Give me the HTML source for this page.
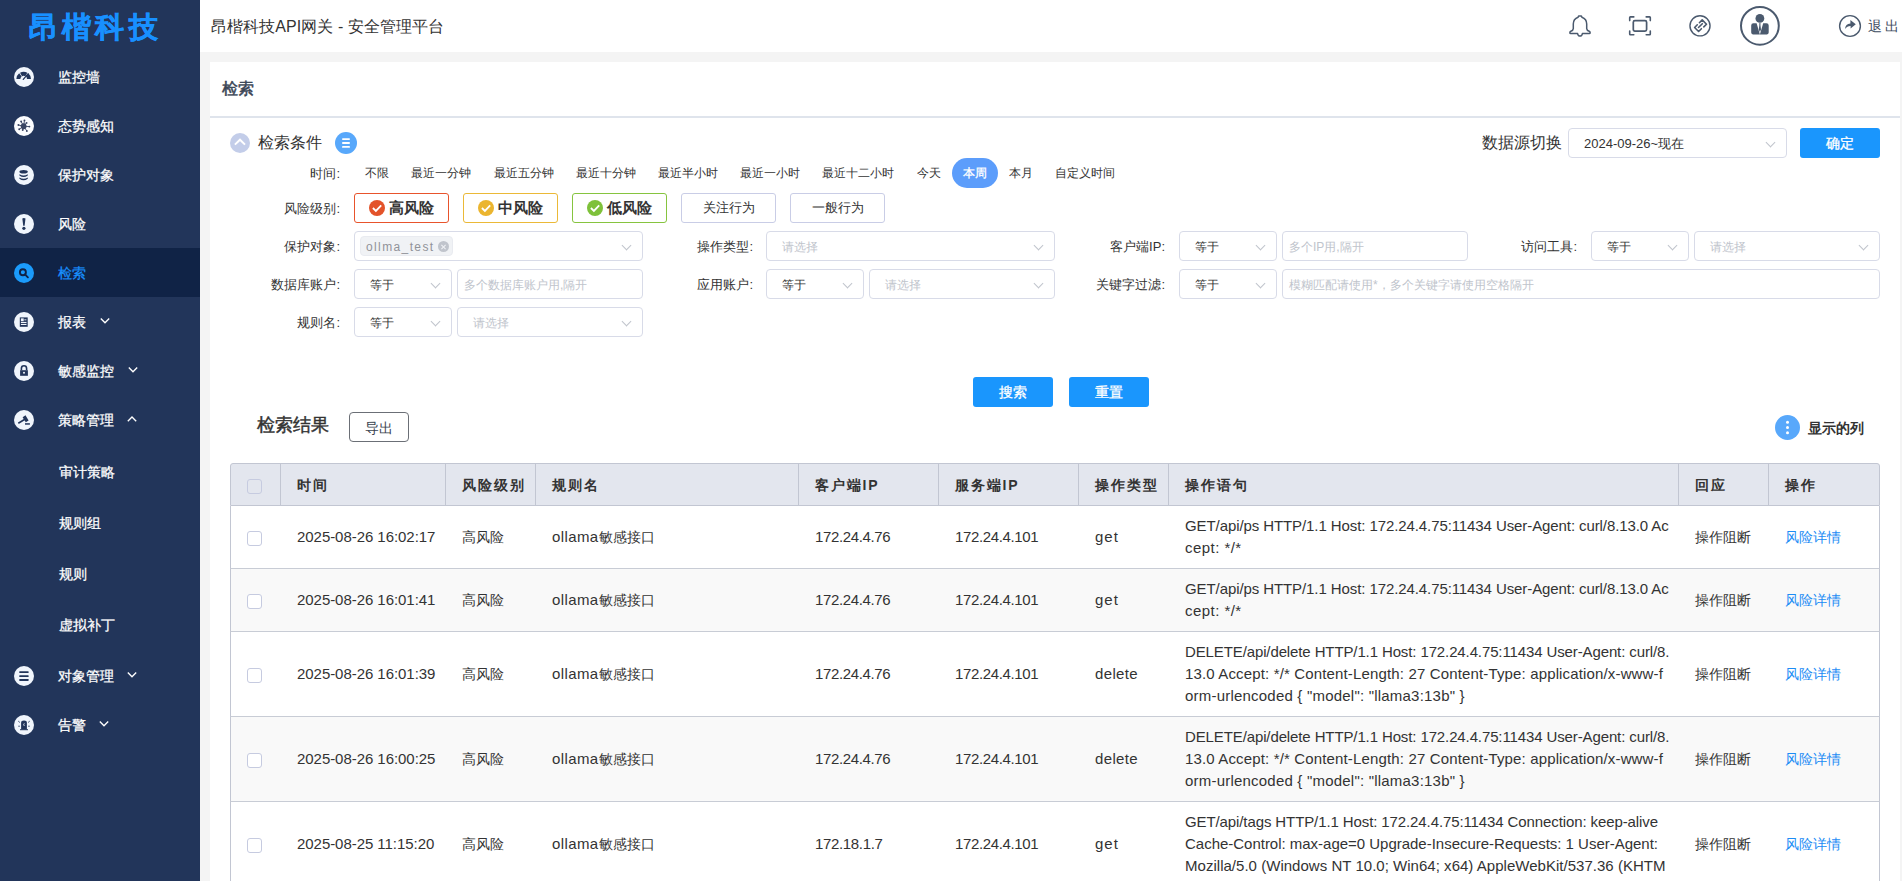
<!DOCTYPE html>
<html><head><meta charset="utf-8">
<style>
*{box-sizing:border-box;margin:0;padding:0}
html,body{width:1902px;height:881px;overflow:hidden;background:#f4f4f4;font-family:"Liberation Sans",sans-serif;color:#333}
.abs{position:absolute}
#side{position:absolute;left:0;top:0;width:200px;height:881px;background:#22355a}
#logo{position:absolute;left:28.5px;top:7px;font-size:29px;font-weight:bold;color:#1890ff;letter-spacing:4.4px;line-height:40px;white-space:nowrap;-webkit-text-stroke:0.5px #1890ff}
.mi{position:absolute;left:0;width:200px;height:49px}
.mi.act{background:#102346}
.mi svg{position:absolute;left:14px;top:14.5px}
.mi .t{position:absolute;left:58px;top:0.5px;line-height:49px;font-size:14px;color:#fff;white-space:nowrap;-webkit-text-stroke:0.25px #fff}
.mi.act .t{color:#1890ff;-webkit-text-stroke:0.25px #1890ff}
.mi .ar{position:absolute;top:20px}
.sub .t{left:59px;top:-0.5px}
#hdr{position:absolute;left:200px;top:0;width:1702px;height:52px;background:#fff}
#title{position:absolute;left:11px;top:1px;line-height:52px;font-size:16px;color:#333;white-space:nowrap;letter-spacing:0.08px}

.sel{position:absolute;border:1px solid #d8dbe8;border-radius:4px;background:#fff}
.sel span{position:absolute;top:0;line-height:30px;font-size:12px;color:#333;white-space:nowrap}
.sel span.ph{color:#c0c4cc}
.chev{position:absolute;top:10px;margin-left:1.5px;width:7px;height:7px;border-right:1px solid #c0c4cc;border-bottom:1px solid #c0c4cc;transform:rotate(45deg)}
.btn{position:absolute;background:#1a96fd;border-radius:3px;color:#fff;font-size:14px;text-align:center;line-height:30px;-webkit-text-stroke:0.3px #fff}
.lbl{position:absolute;font-size:13px;line-height:22px;color:#333;white-space:nowrap}
#times span{padding:0 11.12px;display:block}
#times span.on{background:#5c9dfb;color:#fff;border-radius:15px;-webkit-text-stroke:0.3px #fff}
.rb{position:absolute;top:193px;width:95px;height:30px;border:1px solid;border-radius:3px;display:flex;align-items:center;justify-content:center;font-size:13px;color:#333}
.rb svg{margin-right:4px;margin-left:-1px}
.rb b{font-weight:bold;font-size:14.5px}
.tag{position:absolute;left:5px;top:4px;height:20px;width:93px;background:#f0f2f5;border:1px solid #e9ebf0;border-radius:4px;font-size:12px;line-height:20px;color:#909399;padding-left:5px;letter-spacing:1.38px;white-space:nowrap}
.tag i{position:absolute;left:77px;top:4px;width:11px;height:11px;border-radius:50%;background:#c0c4cc}
.tag i:before,.tag i:after{content:"";position:absolute;left:5px;top:2.5px;width:1px;height:6px;background:#f0f2f5;transform:rotate(45deg)}
.tag i:after{transform:rotate(-45deg)}

.cb{position:absolute;width:15px;height:15px;border:1px solid #c6cbe0;border-radius:3px;background:#fff}
.th{position:absolute;top:464px;height:43px;line-height:43px;font-size:14px;font-weight:bold;color:#333;letter-spacing:1.85px;white-space:nowrap}
.td{position:absolute;display:flex;align-items:center;font-size:14px;color:#333;white-space:nowrap;line-height:22px}
.td.lat,.td .l{font-size:15px}
.td.ip{letter-spacing:-0.3px}
.td.st{letter-spacing:-0.1px}
</style></head><body>
<div id="side">
  <div id="logo">昂楷科技</div>
  <div class="mi" style="top:52px">
    <svg width="20" height="20" viewBox="0 0 20 20"><circle cx="10" cy="10" r="10" fill="#f0f5fc"/><path d="M2.37 12.00 A7.3 7.3 0 0 1 5.18 6.25 L7.64 9.40 A3.3 3.3 0 0 0 6.37 12.00Z M6.02 5.68 A7.3 7.3 0 0 1 13.32 5.68 L11.32 9.14 A3.3 3.3 0 0 0 8.02 9.14Z M14.55 6.58 A7.3 7.3 0 0 1 16.97 12.00 L12.97 12.00 A3.3 3.3 0 0 0 11.88 9.55Z" fill="#22355a"/><path d="M9.28 12.46 L14.17 6.64" stroke="#22355a" stroke-width="1.2" stroke-linecap="round"/></svg>
    <span class="t">监控墙</span></div>
  <div class="mi" style="top:101px">
    <svg width="20" height="20" viewBox="0 0 20 20"><circle cx="10" cy="10" r="10" fill="#fbfcfe"/><g fill="#3a4563"><circle cx="9.67" cy="10.26" r="2.9"/><path d="M9.67 10.26 L10.46 4.38" stroke="#3a4563" stroke-width="0.9"/><circle cx="10.46" cy="4.38" r="0.95"/><path d="M9.67 10.26 L7.13 5.49" stroke="#3a4563" stroke-width="0.9"/><circle cx="7.13" cy="5.49" r="0.95"/><path d="M9.67 10.26 L12.53 6.92" stroke="#3a4563" stroke-width="0.9"/><circle cx="12.53" cy="6.92" r="0.95"/><path d="M9.67 10.26 L4.42 8.99" stroke="#3a4563" stroke-width="0.9"/><circle cx="4.42" cy="8.99" r="0.95"/><path d="M9.67 10.26 L15.39 10.58" stroke="#3a4563" stroke-width="0.9"/><circle cx="15.39" cy="10.58" r="0.95"/><path d="M9.67 10.26 L5.22 13.28" stroke="#3a4563" stroke-width="0.9"/><circle cx="5.22" cy="13.28" r="0.95"/><path d="M9.67 10.26 L8.71 14.07" stroke="#3a4563" stroke-width="0.9"/><circle cx="8.71" cy="14.07" r="0.95"/><path d="M9.67 10.26 L12.85 15.03" stroke="#3a4563" stroke-width="0.9"/><circle cx="12.85" cy="15.03" r="0.95"/></g></svg>
    <span class="t">态势感知</span></div>
  <div class="mi" style="top:150px">
    <svg width="20" height="20" viewBox="0 0 20 20"><circle cx="10" cy="10" r="10" fill="#f0f5fc"/><g fill="#22355a"><ellipse cx="9.6" cy="6.7" rx="4.2" ry="1.8"/><path d="M5.4 9.2 Q9.6 11.6 13.8 9.2 L13.8 10.4 Q9.6 13.4 5.4 10.4Z"/><path d="M5.4 12.6 Q9.6 15 13.8 12.6 L13.8 13.8 Q9.6 16.8 5.4 13.8Z"/></g></svg>
    <span class="t">保护对象</span></div>
  <div class="mi" style="top:199px">
    <svg width="20" height="20" viewBox="0 0 20 20"><circle cx="10" cy="10" r="10" fill="#f0f5fc"/><g fill="#22355a"><path d="M8.3 4.5 Q9.9 3.6 11.5 4.5 L10.6 11.7 L9.2 11.7Z"/><circle cx="9.9" cy="14.3" r="1.6"/></g></svg>
    <span class="t">风险</span></div>
  <div class="mi act" style="top:248px">
    <svg width="20" height="20" viewBox="0 0 20 20"><circle cx="10" cy="10" r="10" fill="#1b9bfb"/><circle cx="8.9" cy="9.2" r="3" fill="none" stroke="#102346" stroke-width="1.9"/><path d="M11 11.4 L13.9 14.3" stroke="#102346" stroke-width="1.9" stroke-linecap="round"/></svg>
    <span class="t">检索</span></div>
  <div class="mi" style="top:297px">
    <svg width="20" height="20" viewBox="0 0 20 20"><circle cx="10" cy="10" r="10" fill="#f0f5fc"/><rect x="5.8" y="5.4" width="7.9" height="9.4" fill="#22355a"/><g fill="#f0f5fc"><rect x="6.9" y="6.4" width="2.8" height="2.8"/><rect x="10.3" y="7.4" width="2.1" height="0.9"/><rect x="6.9" y="9.9" width="5.6" height="1.1"/><rect x="6.9" y="11.9" width="5.6" height="1.1"/></g></svg>
    <span class="t">报表</span><svg class="ar" style="left:99.5px" width="10" height="8" viewBox="0 0 10 8"><path d="M0.8 1.5 L5 5.7 L9.2 1.5" fill="none" stroke="#fff" stroke-width="1.35"/></svg></div>
  <div class="mi" style="top:346px">
    <svg width="20" height="20" viewBox="0 0 20 20"><circle cx="10" cy="10" r="10" fill="#f0f5fc"/><path d="M7.4 9.2 V7.4 A2.6 2.6 0 0 1 12.6 7.4 V9.2" fill="none" stroke="#22355a" stroke-width="1.6"/><rect x="6.1" y="9.2" width="7.8" height="5.6" fill="#22355a"/><circle cx="10" cy="11.8" r="1" fill="#f0f5fc"/></svg>
    <span class="t">敏感监控</span><svg class="ar" style="left:127.5px" width="10" height="8" viewBox="0 0 10 8"><path d="M0.8 1.5 L5 5.7 L9.2 1.5" fill="none" stroke="#fff" stroke-width="1.35"/></svg></div>
  <div class="mi" style="top:395px">
    <svg width="20" height="20" viewBox="0 0 20 20"><circle cx="10" cy="10" r="10" fill="#f0f5fc"/><g fill="#22355a"><path d="M3.9 12.6 L10.5 8.6 L11.3 10 L4.7 13.9Z"/><path d="M8.6 7.2 L11.5 5.3 L14.6 10.5 L11.8 12.3Z"/><rect x="11" y="13.2" width="4.9" height="1.5"/></g></svg>
    <span class="t">策略管理</span><svg class="ar" style="left:127px" width="10" height="8" viewBox="0 0 10 8"><path d="M0.8 6.2 L5 2 L9.2 6.2" fill="none" stroke="#fff" stroke-width="1.35"/></svg></div>
  <div class="mi sub" style="top:447px;height:51px"><span class="t" style="line-height:51px">审计策略</span></div>
  <div class="mi sub" style="top:498px;height:51px"><span class="t" style="line-height:51px">规则组</span></div>
  <div class="mi sub" style="top:549px;height:51px"><span class="t" style="line-height:51px">规则</span></div>
  <div class="mi sub" style="top:600px;height:51px"><span class="t" style="line-height:51px">虚拟补丁</span></div>
  <div class="mi" style="top:651px">
    <svg width="20" height="20" viewBox="0 0 20 20"><circle cx="10" cy="10" r="10" fill="#f0f5fc"/><g fill="#22355a"><rect x="5.3" y="5.3" width="9.3" height="1.8" rx="0.4"/><rect x="5.3" y="9.3" width="9.3" height="1.8" rx="0.4"/><rect x="5.3" y="13.1" width="9.3" height="1.8" rx="0.4"/></g></svg>
    <span class="t">对象管理</span><svg class="ar" style="left:127px" width="10" height="8" viewBox="0 0 10 8"><path d="M0.8 1.5 L5 5.7 L9.2 1.5" fill="none" stroke="#fff" stroke-width="1.35"/></svg></div>
  <div class="mi" style="top:700px">
    <svg width="20" height="20" viewBox="0 0 20 20"><circle cx="10" cy="10" r="10" fill="#f0f5fc"/><g fill="#22355a"><path d="M7.1 14.4 V7.8 Q7.1 5.4 10 5.4 Q12.9 5.4 12.9 7.8 V14.4Z"/><rect x="6" y="14.2" width="8" height="1"/></g><path d="M4.3 6.2 L5.8 7.4 M15.7 6.2 L14.2 7.4 M4.3 11.2 L5.8 11.2 M15.7 11.2 L14.2 11.2" stroke="#22355a" stroke-width="0.9"/><path d="M10.3 8.4 Q9.1 9.6 10.3 10.9" fill="none" stroke="#f0f5fc" stroke-width="0.9"/></svg>
    <span class="t">告警</span><svg class="ar" style="left:99px" width="10" height="8" viewBox="0 0 10 8"><path d="M0.8 1.5 L5 5.7 L9.2 1.5" fill="none" stroke="#fff" stroke-width="1.35"/></svg></div>
</div>
<div id="hdr">
  <div id="title">昂楷科技API网关 - 安全管理平台</div>
</div>
<svg class="abs" style="left:1568px;top:14px" width="24" height="24" viewBox="0 0 24 24"><path d="M10.6 1.9 H13.4 L13.9 3.2 Q18.7 4.8 18.7 10 V14.6 Q18.9 16.6 21.2 17.3 Q22.1 17.6 22.1 18.5 V18.9 Q22.1 19.6 21.3 19.6 H14.4 Q14 22.1 12 22.1 Q10 22.1 9.6 19.6 H2.7 Q1.9 19.6 1.9 18.9 V18.5 Q1.9 17.6 2.8 17.3 Q5.1 16.6 5.3 14.6 V10 Q5.3 4.8 10.1 3.2 Z" fill="none" stroke="#4b5a6e" stroke-width="1.5" stroke-linejoin="round"/></svg>
<svg class="abs" style="left:1628px;top:15px" width="24" height="22" viewBox="0 0 24 22"><path d="M1.7 5.6 V2.6 Q1.7 1.9 2.4 1.9 H5.8 M18.2 1.9 H21.6 Q22.3 1.9 22.3 2.6 V5.6 M22.3 16 V19 Q22.3 19.7 21.6 19.7 H18.2 M5.8 19.7 H2.4 Q1.7 19.7 1.7 19 V16" fill="none" stroke="#4b5a6e" stroke-width="1.6" stroke-linecap="round"/><rect x="5.3" y="5.6" width="13.3" height="10.6" rx="1.6" fill="none" stroke="#4b5a6e" stroke-width="1.7"/></svg>
<svg class="abs" style="left:1688px;top:14px" width="24" height="24" viewBox="0 0 24 24"><circle cx="12" cy="11.8" r="10.05" fill="none" stroke="#4b5a6e" stroke-width="1.4"/><g fill="none" stroke="#4b5a6e" stroke-width="1.6" stroke-linejoin="round" stroke-linecap="round"><path d="M11.4 8.7 L14.2 5.9 L18.5 10.2 L15.8 12.9"/><path d="M9.3 10.8 L6.6 13.5 L10.6 17.5 L13.4 14.7"/><path d="M10.5 13.5 L14.3 9.7"/></g></svg>
<svg class="abs" style="left:1739px;top:5px" width="42" height="42" viewBox="0 0 42 42"><circle cx="20.9" cy="20.8" r="18.9" fill="none" stroke="#4b5a6e" stroke-width="2"/><circle cx="20.9" cy="13.4" r="4.4" fill="#4b5a6e"/><path d="M14.4 18.2 H17.6 L20.9 29.4 L24.2 18.2 H27.4 Q29.7 18.2 29.7 20.6 V27.6 Q29.7 29.4 28 29.4 H13.9 Q12.2 29.4 12.2 27.6 V20.6 Q12.2 18.2 14.4 18.2Z" fill="#4b5a6e"/><path d="M20.1 18.3 H21.7 L21.4 19.8 L22 24.6 L20.9 27 L19.8 24.6 L20.4 19.8Z" fill="#4b5a6e"/></svg>
<svg class="abs" style="left:1838px;top:14px" width="24" height="24" viewBox="0 0 24 24"><circle cx="12" cy="12" r="10.4" fill="none" stroke="#4b5a6e" stroke-width="1.4"/><path d="M7 15.1 Q7.4 9.8 12.4 9.4 V6.1 L17.8 10.3 L12.6 14.5 V11.9 Q9.2 11.8 7 15.1Z" fill="#4b5a6e"/></svg>
<div class="abs" style="left:1868px;top:15px;font-size:14px;line-height:22px;letter-spacing:3px;color:#3c4a5e;white-space:nowrap">退出</div>
<div>
</div>

<div id="panel" style="position:absolute;left:210px;top:62px;width:1690px;height:819px;background:#fff"></div>
<div class="abs" style="left:210px;top:116px;width:1690px;height:2px;background:#dfe4ec"></div>
<div class="abs" style="left:222px;top:77px;font-size:16px;line-height:24px;color:#394455;-webkit-text-stroke:0.5px #394455">检索</div>

<!-- search condition header -->
<svg class="abs" style="left:230px;top:133px" width="20" height="20" viewBox="0 0 20 20"><circle cx="10" cy="10" r="10" fill="#c3cde9"/><path d="M4.9 11.6 L10 6.7 L15 11.6" fill="none" stroke="#fff" stroke-width="2"/></svg>
<div class="abs" style="left:258px;top:131px;font-size:16px;line-height:24px;color:#333">检索条件</div>
<svg class="abs" style="left:335px;top:132px" width="22" height="22" viewBox="0 0 22 22"><circle cx="11" cy="11" r="11" fill="#58a8fb"/><g fill="#fff"><rect x="7" y="6.2" width="8" height="1.8" rx="0.9"/><rect x="7" y="10.1" width="8" height="1.8" rx="0.9"/><rect x="7" y="14" width="8" height="1.8" rx="0.9"/></g></svg>

<div class="abs" style="left:1482px;top:131px;font-size:16px;line-height:24px;color:#333">数据源切换</div>
<div class="sel" style="left:1568px;top:128px;width:219px;height:30px"><span style="left:15px;font-size:13px">2024-09-26~现在</span><i class="chev" style="left:196px"></i></div>
<div class="btn" style="left:1800px;top:128px;width:80px;height:30px;font-size:14px">确定</div>

<!-- time row -->
<div class="lbl" style="right:1562px;top:163px">时间:</div>
<div class="abs" id="times" style="left:354px;top:158px;height:30px;display:flex;font-size:12px;line-height:31px;color:#333;white-space:nowrap">
<span>不限</span><span>最近一分钟</span><span>最近五分钟</span><span>最近十分钟</span><span>最近半小时</span><span>最近一小时</span><span>最近十二小时</span><span>今天</span><span class="on">本周</span><span>本月</span><span>自定义时间</span>
</div>

<!-- risk row -->
<div class="lbl" style="right:1562px;top:198px">风险级别:</div>
<div class="rb" style="left:354px;border-color:#e8542c"><svg width="16" height="16" viewBox="0 0 16 16"><circle cx="8" cy="8" r="8" fill="#e3532a"/><path d="M3.9 8 L6.9 10.9 L12.2 5.4" fill="none" stroke="#fff" stroke-width="1.8"/></svg><b>高风险</b></div>
<div class="rb" style="left:463px;border-color:#ebb937"><svg width="16" height="16" viewBox="0 0 16 16"><circle cx="8" cy="8" r="8" fill="#ebb52f"/><path d="M3.9 8 L6.9 10.9 L12.2 5.4" fill="none" stroke="#fff" stroke-width="1.8"/></svg><b>中风险</b></div>
<div class="rb" style="left:572px;border-color:#86c43f"><svg width="16" height="16" viewBox="0 0 16 16"><circle cx="8" cy="8" r="8" fill="#7ec13a"/><path d="M3.9 8 L6.9 10.9 L12.2 5.4" fill="none" stroke="#fff" stroke-width="1.8"/></svg><b>低风险</b></div>
<div class="rb" style="left:681px;border-color:#c9cde6;font-weight:normal">关注行为</div>
<div class="rb" style="left:790px;border-color:#c9cde6;font-weight:normal">一般行为</div>

<!-- row 1 -->
<div class="lbl" style="right:1562px;top:236px">保护对象:</div>
<div class="sel" style="left:354px;top:231px;width:289px;height:30px"><div class="tag">ollma_test<i></i></div><i class="chev" style="left:266px"></i></div>
<div class="lbl" style="right:1149px;top:236px">操作类型:</div>
<div class="sel" style="left:766px;top:231px;width:289px;height:30px"><span class="ph" style="left:15px">请选择</span><i class="chev" style="left:266px"></i></div>
<div class="lbl" style="right:737px;top:236px">客户端IP:</div>
<div class="sel" style="left:1179px;top:231px;width:98px;height:30px"><span style="left:15px">等于</span><i class="chev" style="left:75px"></i></div>
<div class="sel" style="left:1282px;top:231px;width:186px;height:30px"><span class="ph" style="left:6px">多个IP用,隔开</span></div>
<div class="lbl" style="right:325px;top:236px">访问工具:</div>
<div class="sel" style="left:1591px;top:231px;width:98px;height:30px"><span style="left:15px">等于</span><i class="chev" style="left:75px"></i></div>
<div class="sel" style="left:1694px;top:231px;width:186px;height:30px"><span class="ph" style="left:15px">请选择</span><i class="chev" style="left:163px"></i></div>

<!-- row 2 -->
<div class="lbl" style="right:1562px;top:274px">数据库账户:</div>
<div class="sel" style="left:354px;top:269px;width:98px;height:30px"><span style="left:15px">等于</span><i class="chev" style="left:75px"></i></div>
<div class="sel" style="left:457px;top:269px;width:186px;height:30px"><span class="ph" style="left:6px">多个数据库账户用,隔开</span></div>
<div class="lbl" style="right:1149px;top:274px">应用账户:</div>
<div class="sel" style="left:766px;top:269px;width:98px;height:30px"><span style="left:15px">等于</span><i class="chev" style="left:75px"></i></div>
<div class="sel" style="left:869px;top:269px;width:186px;height:30px"><span class="ph" style="left:15px">请选择</span><i class="chev" style="left:163px"></i></div>
<div class="lbl" style="right:737px;top:274px">关键字过滤:</div>
<div class="sel" style="left:1179px;top:269px;width:98px;height:30px"><span style="left:15px">等于</span><i class="chev" style="left:75px"></i></div>
<div class="sel" style="left:1282px;top:269px;width:598px;height:30px"><span class="ph" style="left:6px">模糊匹配请使用*，多个关键字请使用空格隔开</span></div>

<!-- row 3 -->
<div class="lbl" style="right:1562px;top:312px">规则名:</div>
<div class="sel" style="left:354px;top:307px;width:98px;height:30px"><span style="left:15px">等于</span><i class="chev" style="left:75px"></i></div>
<div class="sel" style="left:457px;top:307px;width:186px;height:30px"><span class="ph" style="left:15px">请选择</span><i class="chev" style="left:163px"></i></div>

<div class="btn" style="left:973px;top:377px;width:80px;height:30px">搜索</div>
<div class="btn" style="left:1069px;top:377px;width:80px;height:30px">重置</div>

<div class="abs" style="left:256.5px;top:413px;font-size:18px;line-height:24px;color:#333;-webkit-text-stroke:0.45px #333">检索结果</div>
<div class="abs" style="left:349px;top:412px;width:60px;height:30px;border:1px solid #6b6f76;border-radius:4px;font-size:14px;line-height:30px;text-align:center;color:#3a4350">导出</div>
<svg class="abs" style="left:1775px;top:415px" width="25" height="25" viewBox="0 0 25 25"><circle cx="12.5" cy="12.5" r="12.5" fill="#58a8fb"/><g fill="#fff"><circle cx="12.5" cy="7.3" r="1.5"/><circle cx="12.5" cy="12.5" r="1.5"/><circle cx="12.5" cy="17.7" r="1.5"/></g></svg>
<div class="abs" style="left:1808px;top:416px;font-size:14px;font-weight:bold;line-height:24px;color:#333">显示的列</div>
<!--TBL-->
<div class="abs" style="left:230px;top:463px;width:1650px;height:43px;background:#e3e6ee;border:1px solid #c2c6d2;border-radius:3px 3px 0 0"></div>
<div class="abs" style="left:280px;top:463px;width:1px;height:43px;background:#c2c6d2"></div>
<div class="abs" style="left:445px;top:463px;width:1px;height:43px;background:#c2c6d2"></div>
<div class="abs" style="left:535px;top:463px;width:1px;height:43px;background:#c2c6d2"></div>
<div class="abs" style="left:798px;top:463px;width:1px;height:43px;background:#c2c6d2"></div>
<div class="abs" style="left:938px;top:463px;width:1px;height:43px;background:#c2c6d2"></div>
<div class="abs" style="left:1078px;top:463px;width:1px;height:43px;background:#c2c6d2"></div>
<div class="abs" style="left:1168px;top:463px;width:1px;height:43px;background:#c2c6d2"></div>
<div class="abs" style="left:1678px;top:463px;width:1px;height:43px;background:#c2c6d2"></div>
<div class="abs" style="left:1768px;top:463px;width:1px;height:43px;background:#c2c6d2"></div>
<div class="cb" style="left:247px;top:479px;background:#e3e6ee"></div>
<div class="th" style="left:297px">时间</div>
<div class="th" style="left:462px">风险级别</div>
<div class="th" style="left:552px">规则名</div>
<div class="th" style="left:815px">客户端IP</div>
<div class="th" style="left:955px">服务端IP</div>
<div class="th" style="left:1095px">操作类型</div>
<div class="th" style="left:1185px">操作语句</div>
<div class="th" style="left:1695px">回应</div>
<div class="th" style="left:1785px">操作</div>
<div class="abs" style="left:230px;top:506px;width:1650px;height:63px;background:#fff;border-left:1px solid #c2c6d2;border-right:1px solid #c2c6d2;border-bottom:1px solid #c8ccd5"></div>
<div class="cb" style="left:247px;top:531px"></div>
<div class="td lat" style="left:297px;top:506px;height:62px"><span style="letter-spacing:-0.05px">2025-08-26 16:02:17</span></div>
<div class="td" style="left:462px;top:506px;height:62px">高风险</div>
<div class="td" style="left:552px;top:506px;height:62px"><span class="l" style="letter-spacing:0.4px">ollama</span>敏感接口</div>
<div class="td lat" style="left:815px;top:506px;height:62px"><span style="letter-spacing:-0.37px">172.24.4.76</span></div>
<div class="td lat" style="left:955px;top:506px;height:62px"><span style="letter-spacing:-0.36px">172.24.4.101</span></div>
<div class="td lat" style="left:1095px;top:506px;height:62px"><span style="letter-spacing:1.0px">get</span></div>
<div class="td lat st" style="left:1185px;top:506px;height:62px"><div><div style="letter-spacing:-0.09px">GET/api/ps HTTP/1.1 Host: 172.24.4.75:11434 User-Agent: curl/8.13.0 Ac</div><div style="letter-spacing:0.45px">cept: */*</div></div></div>
<div class="td" style="left:1695px;top:506px;height:62px">操作阻断</div>
<div class="td" style="left:1785px;top:506px;height:62px"><span style="color:#1c8cf5">风险详情</span></div>
<div class="abs" style="left:230px;top:569px;width:1650px;height:63px;background:#f9f9f9;border-left:1px solid #c2c6d2;border-right:1px solid #c2c6d2;border-bottom:1px solid #c8ccd5"></div>
<div class="cb" style="left:247px;top:594px"></div>
<div class="td lat" style="left:297px;top:569px;height:62px"><span style="letter-spacing:-0.05px">2025-08-26 16:01:41</span></div>
<div class="td" style="left:462px;top:569px;height:62px">高风险</div>
<div class="td" style="left:552px;top:569px;height:62px"><span class="l" style="letter-spacing:0.4px">ollama</span>敏感接口</div>
<div class="td lat" style="left:815px;top:569px;height:62px"><span style="letter-spacing:-0.37px">172.24.4.76</span></div>
<div class="td lat" style="left:955px;top:569px;height:62px"><span style="letter-spacing:-0.36px">172.24.4.101</span></div>
<div class="td lat" style="left:1095px;top:569px;height:62px"><span style="letter-spacing:1.0px">get</span></div>
<div class="td lat st" style="left:1185px;top:569px;height:62px"><div><div style="letter-spacing:-0.09px">GET/api/ps HTTP/1.1 Host: 172.24.4.75:11434 User-Agent: curl/8.13.0 Ac</div><div style="letter-spacing:0.45px">cept: */*</div></div></div>
<div class="td" style="left:1695px;top:569px;height:62px">操作阻断</div>
<div class="td" style="left:1785px;top:569px;height:62px"><span style="color:#1c8cf5">风险详情</span></div>
<div class="abs" style="left:230px;top:632px;width:1650px;height:85px;background:#fff;border-left:1px solid #c2c6d2;border-right:1px solid #c2c6d2;border-bottom:1px solid #c8ccd5"></div>
<div class="cb" style="left:247px;top:668px"></div>
<div class="td lat" style="left:297px;top:632px;height:84px"><span style="letter-spacing:-0.05px">2025-08-26 16:01:39</span></div>
<div class="td" style="left:462px;top:632px;height:84px">高风险</div>
<div class="td" style="left:552px;top:632px;height:84px"><span class="l" style="letter-spacing:0.4px">ollama</span>敏感接口</div>
<div class="td lat" style="left:815px;top:632px;height:84px"><span style="letter-spacing:-0.37px">172.24.4.76</span></div>
<div class="td lat" style="left:955px;top:632px;height:84px"><span style="letter-spacing:-0.36px">172.24.4.101</span></div>
<div class="td lat" style="left:1095px;top:632px;height:84px"><span style="letter-spacing:0.36px">delete</span></div>
<div class="td lat st" style="left:1185px;top:632px;height:84px"><div><div style="letter-spacing:-0.117px">DELETE/api/delete HTTP/1.1 Host: 172.24.4.75:11434 User-Agent: curl/8.</div><div style="letter-spacing:0.149px">13.0 Accept: */* Content-Length: 27 Content-Type: application/x-www-f</div><div style="letter-spacing:0.21px">orm-urlencoded { "model": "llama3:13b" }</div></div></div>
<div class="td" style="left:1695px;top:632px;height:84px">操作阻断</div>
<div class="td" style="left:1785px;top:632px;height:84px"><span style="color:#1c8cf5">风险详情</span></div>
<div class="abs" style="left:230px;top:717px;width:1650px;height:85px;background:#f9f9f9;border-left:1px solid #c2c6d2;border-right:1px solid #c2c6d2;border-bottom:1px solid #c8ccd5"></div>
<div class="cb" style="left:247px;top:753px"></div>
<div class="td lat" style="left:297px;top:717px;height:84px"><span style="letter-spacing:-0.05px">2025-08-26 16:00:25</span></div>
<div class="td" style="left:462px;top:717px;height:84px">高风险</div>
<div class="td" style="left:552px;top:717px;height:84px"><span class="l" style="letter-spacing:0.4px">ollama</span>敏感接口</div>
<div class="td lat" style="left:815px;top:717px;height:84px"><span style="letter-spacing:-0.37px">172.24.4.76</span></div>
<div class="td lat" style="left:955px;top:717px;height:84px"><span style="letter-spacing:-0.36px">172.24.4.101</span></div>
<div class="td lat" style="left:1095px;top:717px;height:84px"><span style="letter-spacing:0.36px">delete</span></div>
<div class="td lat st" style="left:1185px;top:717px;height:84px"><div><div style="letter-spacing:-0.117px">DELETE/api/delete HTTP/1.1 Host: 172.24.4.75:11434 User-Agent: curl/8.</div><div style="letter-spacing:0.149px">13.0 Accept: */* Content-Length: 27 Content-Type: application/x-www-f</div><div style="letter-spacing:0.21px">orm-urlencoded { "model": "llama3:13b" }</div></div></div>
<div class="td" style="left:1695px;top:717px;height:84px">操作阻断</div>
<div class="td" style="left:1785px;top:717px;height:84px"><span style="color:#1c8cf5">风险详情</span></div>
<div class="abs" style="left:230px;top:802px;width:1650px;height:85px;background:#fff;border-left:1px solid #c2c6d2;border-right:1px solid #c2c6d2;border-bottom:1px solid #c8ccd5"></div>
<div class="cb" style="left:247px;top:838px"></div>
<div class="td lat" style="left:297px;top:802px;height:84px"><span style="letter-spacing:-0.05px">2025-08-25 11:15:20</span></div>
<div class="td" style="left:462px;top:802px;height:84px">高风险</div>
<div class="td" style="left:552px;top:802px;height:84px"><span class="l" style="letter-spacing:0.4px">ollama</span>敏感接口</div>
<div class="td lat" style="left:815px;top:802px;height:84px"><span style="letter-spacing:-0.34px">172.18.1.7</span></div>
<div class="td lat" style="left:955px;top:802px;height:84px"><span style="letter-spacing:-0.36px">172.24.4.101</span></div>
<div class="td lat" style="left:1095px;top:802px;height:84px"><span style="letter-spacing:1.0px">get</span></div>
<div class="td lat st" style="left:1185px;top:802px;height:84px"><div><div style="letter-spacing:-0.104px">GET/api/tags HTTP/1.1 Host: 172.24.4.75:11434 Connection: keep-alive</div><div style="letter-spacing:-0.016px">Cache-Control: max-age=0 Upgrade-Insecure-Requests: 1 User-Agent:</div><div style="letter-spacing:0.026px">Mozilla/5.0 (Windows NT 10.0; Win64; x64) AppleWebKit/537.36 (KHTM</div></div></div>
<div class="td" style="left:1695px;top:802px;height:84px">操作阻断</div>
<div class="td" style="left:1785px;top:802px;height:84px"><span style="color:#1c8cf5">风险详情</span></div>
<!--/TBL-->


</body></html>
